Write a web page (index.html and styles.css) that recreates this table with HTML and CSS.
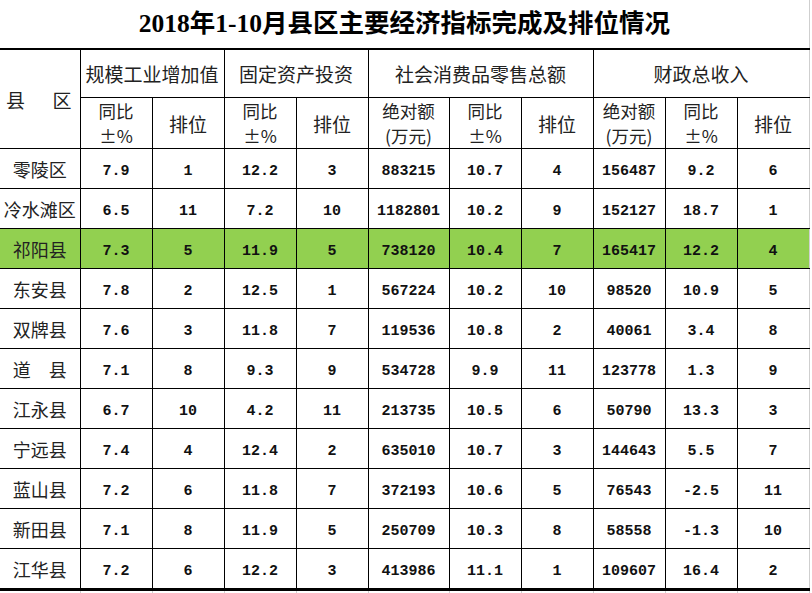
FILE: index.html
```html
<!DOCTYPE html>
<html lang="zh-CN">
<head>
<meta charset="utf-8">
<title>2018年1-10月县区主要经济指标完成及排位情况</title>
<link rel="stylesheet" href="styles.css">
</head>
<body>
<table class="sheet">
  <colgroup>
    <col class="w80"><col class="w72"><col class="w72"><col class="w72"><col class="w72">
    <col class="w81"><col class="w72"><col class="w72"><col class="w72"><col class="w72"><col class="w72">
  </colgroup>
  <thead>
    <tr class="title-row">
      <th class="title" colspan="11">2018年1-10月县区主要经济指标完成及排位情况</th>
    </tr>
    <tr class="head1">
      <th class="county-head" rowspan="2"><span class="split"><span>县</span><span>区</span></span></th>
      <th colspan="2">规模工业增加值</th>
      <th colspan="2">固定资产投资</th>
      <th colspan="3">社会消费品零售总额</th>
      <th colspan="3" class="last">财政总收入</th>
    </tr>
    <tr class="head2">
      <th><span class="two">同比<br>±%</span></th>
      <th>排位</th>
      <th><span class="two">同比<br>±%</span></th>
      <th>排位</th>
      <th><span class="two">绝对额<br>(万元)</span></th>
      <th><span class="two">同比<br>±%</span></th>
      <th>排位</th>
      <th><span class="two">绝对额<br>(万元)</span></th>
      <th><span class="two">同比<br>±%</span></th>
      <th class="last">排位</th>
    </tr>
  </thead>
  <tbody>
    <tr><td class="name">零陵区</td><td>7.9</td><td>1</td><td>12.2</td><td>3</td><td>883215</td><td>10.7</td><td>4</td><td>156487</td><td>9.2</td><td class="last">6</td></tr>
    <tr><td class="name">冷水滩区</td><td>6.5</td><td>11</td><td>7.2</td><td>10</td><td>1182801</td><td>10.2</td><td>9</td><td>152127</td><td>18.7</td><td class="last">1</td></tr>
    <tr class="hl"><td class="name">祁阳县</td><td>7.3</td><td>5</td><td>11.9</td><td>5</td><td>738120</td><td>10.4</td><td>7</td><td>165417</td><td>12.2</td><td class="last">4</td></tr>
    <tr><td class="name">东安县</td><td>7.8</td><td>2</td><td>12.5</td><td>1</td><td>567224</td><td>10.2</td><td>10</td><td>98520</td><td>10.9</td><td class="last">5</td></tr>
    <tr><td class="name">双牌县</td><td>7.6</td><td>3</td><td>11.8</td><td>7</td><td>119536</td><td>10.8</td><td>2</td><td>40061</td><td>3.4</td><td class="last">8</td></tr>
    <tr><td class="name">道　县</td><td>7.1</td><td>8</td><td>9.3</td><td>9</td><td>534728</td><td>9.9</td><td>11</td><td>123778</td><td>1.3</td><td class="last">9</td></tr>
    <tr><td class="name">江永县</td><td>6.7</td><td>10</td><td>4.2</td><td>11</td><td>213735</td><td>10.5</td><td>6</td><td>50790</td><td>13.3</td><td class="last">3</td></tr>
    <tr><td class="name">宁远县</td><td>7.4</td><td>4</td><td>12.4</td><td>2</td><td>635010</td><td>10.7</td><td>3</td><td>144643</td><td>5.5</td><td class="last">7</td></tr>
    <tr><td class="name">蓝山县</td><td>7.2</td><td>6</td><td>11.8</td><td>7</td><td>372193</td><td>10.6</td><td>5</td><td>76543</td><td>-2.5</td><td class="last">11</td></tr>
    <tr><td class="name">新田县</td><td>7.1</td><td>8</td><td>11.9</td><td>5</td><td>250709</td><td>10.3</td><td>8</td><td>58558</td><td>-1.3</td><td class="last">10</td></tr>
    <tr class="end"><td class="name">江华县</td><td>7.2</td><td>6</td><td>12.2</td><td>3</td><td>413986</td><td>11.1</td><td>1</td><td>109607</td><td>16.4</td><td class="last">2</td></tr>
    <tr class="tail"><td></td><td></td><td></td><td></td><td></td><td></td><td></td><td></td><td></td><td></td><td class="last"></td></tr>
  </tbody>
</table>
</body>
</html>
```

FILE: styles.css
```css
html, body {
  margin: 0;
  padding: 0;
  background: #ffffff;
}

.sheet {
  width: 809px;
  table-layout: fixed;
  border-collapse: collapse;
  color: #111111;
  font-family: "Noto Sans CJK SC", "Noto Sans", sans-serif;
}

.w80 { width: 80px; }
.w81 { width: 81px; }
.w72 { width: 72px; }

.sheet th,
.sheet td {
  padding: 0;
  text-align: center;
  vertical-align: middle;
  border: 1px solid #000000;
  overflow: hidden;
  white-space: nowrap;
}

.sheet th:first-child,
.sheet td:first-child {
  border-left: none;
}

.sheet .last {
  border-right: 1px solid #cfcfcf;
}

.title-row .title {
  height: 48px;
  vertical-align: top;
  border-top: none;
  border-left: none;
  border-right: 1px solid #cfcfcf;
  border-bottom: 2px solid #000000;
  font-family: "Liberation Serif", "Noto Sans CJK SC", serif;
  font-weight: bold;
  font-size: 25.5px;
  line-height: 47px;
  color: #000000;
}

.head1 th {
  height: 47px;
  font-weight: normal;
  font-size: 19px;
  color: #222222;
}

.head2 th {
  height: 49px;
  font-weight: normal;
  font-size: 19px;
  color: #222222;
}

.head2 .two {
  display: block;
  font-size: 17.5px;
  line-height: 25px;
}

.county-head .split {
  display: flex;
  justify-content: space-between;
  padding: 0 8px 0 6px;
  font-size: 19px;
}

.sheet tbody td {
  height: 39px;
  vertical-align: bottom;
  line-height: 32px;
  font-family: "Liberation Mono", "DejaVu Sans Mono", monospace;
  font-weight: bold;
  font-size: 15px;
  color: #111111;
}

.sheet tbody td.name {
  vertical-align: middle;
  line-height: normal;
  font-family: "Noto Sans CJK SC", "Noto Sans", sans-serif;
  font-weight: normal;
  font-size: 18px;
  color: #222222;
}

.sheet tbody tr.hl td {
  background: #92d050;
}

.sheet tbody tr.end td {
  border-bottom: 3px solid #000000;
}

.sheet tbody tr.tail td {
  height: 2px;
  line-height: 2px;
  border-top: 3px solid #000000;
  border-bottom: none;
  border-left: 1px solid #d0d0d0;
  border-right: 1px solid #d0d0d0;
}

.sheet tbody tr.tail td:first-child {
  border-left: none;
}
```
